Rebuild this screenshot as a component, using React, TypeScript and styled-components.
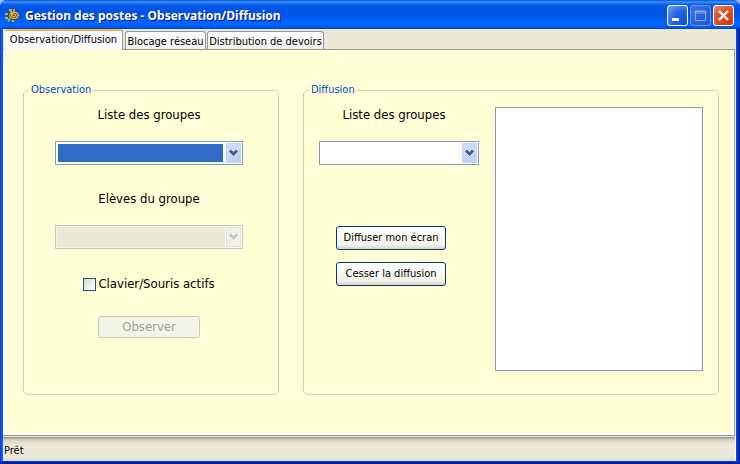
import React from 'react';
import styled, { createGlobalStyle } from 'styled-components';

const Page = createGlobalStyle`
  * { box-sizing: border-box; }
  body {
    margin: 0;
    background: #9db8e6;
    font: 11px/14px "DejaVu Sans Condensed", "DejaVu Sans", sans-serif;
    color: #000;
  }
  button, select, input { font: inherit; margin: 0; }
`;

const Window = styled.div`
  display: flex;
  flex-direction: column;
  min-height: 100vh;
  padding: 0 4px 3px 3px;
  border-radius: 7px 7px 0 0;
  background: linear-gradient(90deg, #0831d9 0, #166aee 2px, #0855dd 3px, #0855dd calc(100% - 4px), #0441d8 calc(100% - 3px), #00138c 100%);
  box-shadow: inset 0 -2px #001ea0, inset 0 -3px #0441d8;
`;

const TitleBar = styled.header`
  display: flex;
  align-items: center;
  gap: 5px;
  height: 29px;
  margin: 0 -4px 0 -3px;
  padding: 2px 6px 0 5px;
  border-radius: 7px 7px 0 0;
  background: linear-gradient(#0a4fc8 0, #3d95ff 2px, #0a62ee 4px, #0055e5 7px, #0054e3 14px, #0062fb 20px, #0066ff 25px, #005bf0 27px, #003dc4 29px);
`;

const Title = styled.h1`
  flex: 1;
  margin: 0;
  font: bold 12px/18px "Noto Sans", "Open Sans", sans-serif;
  color: #fff;
  text-shadow: 1px 1px #0f1089;
  white-space: nowrap;
`;

const Controls = styled.div`
  display: flex;
  gap: 2px;
`;

const Control = styled.button<{ $kind: 'blue' | 'dim' | 'red' }>`
  display: grid;
  place-items: center;
  width: 21px;
  height: 21px;
  padding: 0;
  border: 1px solid ${p => (p.$kind === 'dim' ? '#6d94ee' : '#fff')};
  border-radius: 3px;
  background: ${p =>
    p.$kind === 'red'
      ? 'radial-gradient(circle at 80% 90%, #d33a08, #e0502c 60%, #ee8f74)'
      : p.$kind === 'dim'
        ? 'linear-gradient(135deg, #3b70e6, #1f56dc)'
        : 'radial-gradient(circle at 90% 90%, #0054e9, #2663e0 50%, #789df0)'};
`;

const Tabs = styled.nav`
  display: flex;
  align-items: flex-end;
  height: 20px;
  padding-left: 1px;
  gap: 1px;
  background: #ece9d8;
`;

const Tab = styled.button<{ $active?: boolean; $width: number }>`
  width: ${p => p.$width}px;
  height: ${p => (p.$active ? 21 : 18)}px;
  margin: ${p => (p.$active ? '0 1px -1px 0' : '0')};
  padding: ${p => (p.$active ? '0 0 3px' : '2px 0 0')};
  border: 1px solid #919b9c;
  border-bottom: 0;
  border-radius: 3px 3px 0 0;
  background: linear-gradient(#fff, #f2f1e9);
  line-height: 15px;
  white-space: nowrap;
  ${p => p.$active && `
    z-index: 1;
    border-top: 2px solid #ffb13c;
    border-left-color: #fff;
    background: #fcfcfe;
  `}
`;

const Panel = styled.main`
  flex: 1;
  display: grid;
  grid-template-columns: 256fr 416fr;
  gap: 24px;
  padding: 33px 15px 40px 20px;
  border: solid #919b9c;
  border-width: 1px 1px 1px 0;
  margin-right: 1px;
  background: #ffffd5;
  box-shadow: inset 4px 0 #fcfcf0, inset 0 -2px #fff, inset -1px 0 #fff;
`;

const PanelFrame = styled.div`
  flex: 1;
  display: flex;
  flex-direction: column;
  background: #ece9d8;
`;

const Group = styled.fieldset`
  min-width: 0;
  margin: 0;
  padding: 10px 15px 23px;
  border: 1px solid #d0d0bf;
  border-radius: 5px;
`;

const Legend = styled.legend`
  margin-left: -10px;
  padding: 0 2px;
  color: #0046d5;
`;

const Observation = styled.div`
  display: flex;
  flex-direction: column;
  align-items: center;
  padding: 0 20px 0 16px;
`;

const Broadcast = styled.div`
  display: grid;
  grid-template-columns: 160fr 208fr;
  gap: 16px;
  height: 100%;
`;

const Column = styled.div`
  display: flex;
  flex-direction: column;
`;

const Field = styled.div`
  display: flex;
  flex-direction: column;
  align-self: stretch;
  gap: 18px;
`;

const Caption = styled.label<{ $indent?: boolean }>`
  font-size: 13px;
  line-height: 16px;
  white-space: nowrap;
  text-align: center;
  padding-right: ${p => (p.$indent ? 10 : 0)}px;
`;

const ComboBox = styled.div`
  display: grid;
  align-items: center;
  & > * { grid-area: 1 / 1; }
`;

const Select = styled.select<{ $selected?: boolean }>`
  appearance: none;
  width: 100%;
  height: 24px;
  padding: 2px 19px 2px 2px;
  border: 1px solid #7f9db9;
  border-radius: 0;
  outline: 0;
  background: ${p => (p.$selected ? 'linear-gradient(#316ac5, #316ac5) content-box, #fff' : '#fff')};
  &:disabled {
    opacity: 1;
    border-color: #c9c7ba;
    background: #ece9d8;
    box-shadow: inset 0 0 0 1px #f5f4ea;
  }
`;

const Arrow = styled.span<{ $disabled?: boolean }>`
  justify-self: end;
  display: grid;
  place-items: center;
  width: 15px;
  height: 20px;
  margin-right: 2px;
  border-radius: 1px;
  color: ${p => (p.$disabled ? '#c9c7ba' : '#4d6185')};
  background: ${p => (p.$disabled ? '#f2f1e8' : 'linear-gradient(135deg, #d4e1ff, #b9cdf8)')};
  box-shadow: ${p => (p.$disabled ? '0 0 0 1px #fff, inset 0 0 0 1px #e3e1d4' : 'inset 0 0 0 1px #c1d3fb')};
  pointer-events: none;
`;

const Check = styled.label`
  display: flex;
  align-items: center;
  gap: 2px;
  font-size: 13px;
  line-height: 16px;
  white-space: nowrap;
`;

const CheckInput = styled.input`
  appearance: none;
  width: 13px;
  height: 13px;
  border: 1px solid #1c5180;
  background: linear-gradient(135deg, #dcdcd7, #fff);
  &:checked { background: #21a121; }
`;

const Button = styled.button`
  width: 110px;
  height: 24px;
  padding: 0;
  border: 1px solid #003c74;
  border-radius: 3px;
  background: linear-gradient(#fff, #f3f2ec 80%, #d9d3c5);
  white-space: nowrap;
  &:disabled {
    width: 102px;
    height: 22px;
    border-color: #c9c7ba;
    background: #f5f4ea;
    color: #a1a192;
    font-size: 13px;
    line-height: 16px;
  }
`;

const Actions = styled.div`
  display: flex;
  flex-direction: column;
  align-items: center;
  gap: 12px;
  padding-right: 16px;
`;

const Space = styled.div<{ $size: number }>`
  height: ${p => p.$size}px;
`;

const List = styled.select`
  width: 100%;
  height: 100%;
  padding: 0;
  border: 1px solid #7f9db9;
  border-radius: 0;
  background: #fff;
  overflow: hidden;
`;

const StatusBar = styled.footer`
  height: 24px;
  padding: 7px 1px 0;
  margin-top: 1px;
  border-right: 1px solid #fff;
  background: linear-gradient(#8f8d82 0, #c5c2b4 2px, #dedbcd 4px, #ece9d8 9px, #ece9d8 20px, #dedac8 24px);
`;

function SunIcon() {
  return (
    <svg width="15" height="15" viewBox="0 0 15 15" fill="none" aria-hidden="true">
      <path d="M4 2h2v2M9 1v2M0 6h3M0 10h3M3 13l2-2M8 14v-2" stroke="#e3aa21" strokeWidth="2" />
      <ellipse cx="9" cy="7.5" rx="5" ry="4" fill="#f0bb30" />
      <path d="M5 6c0 5 7 4 7 1 0-2-4-2-4 0 0 1 2 1 2 0M14 8c-1 4-6 4-8 3" stroke="#50401c" />
    </svg>
  );
}

function Chevron() {
  return (
    <svg width="9" height="6" viewBox="0 0 9 6" fill="currentColor" shapeRendering="crispEdges" aria-hidden="true">
      <path d="M1 0h2v1h1v1h1V1h1V0h2v1h1v1H8v1H7v1H6v1H5v1H4V5H3V4H2V3H1V2H0V1h1z" />
    </svg>
  );
}

export default function App() {
  return (
    <>
      <Page />
      <Window>
        <TitleBar>
          <SunIcon />
          <Title>Gestion des postes - Observation/Diffusion</Title>
          <Controls>
            <Control $kind="blue" aria-label="Réduire">
              <svg width="19" height="19"><path d="M4 12h7v3H4z" fill="#fff" /></svg>
            </Control>
            <Control $kind="dim" aria-label="Agrandir" disabled>
              <svg width="19" height="19" fill="none"><path d="M4.500 5.500h10v9h-10zM4 5h11v2H4z" stroke="#8ea6ef" /></svg>
            </Control>
            <Control $kind="red" aria-label="Fermer">
              <svg width="19" height="19"><path d="M5 5l9 9M14 5l-9 9" stroke="#fff" strokeWidth="2.300" /></svg>
            </Control>
          </Controls>
        </TitleBar>
        <PanelFrame>
          <Tabs>
            <Tab $active $width={119}>Observation/Diffusion</Tab>
            <Tab $width={81}>Blocage réseau</Tab>
            <Tab $width={117}>Distribution de devoirs</Tab>
          </Tabs>
          <Panel>
            <Group>
              <Legend>Observation</Legend>
              <Observation>
                <Field>
                  <Caption htmlFor="observed-group">Liste des groupes</Caption>
                  <ComboBox>
                    <Select id="observed-group" $selected />
                    <Arrow><Chevron /></Arrow>
                  </ComboBox>
                </Field>
                <Space $size={26} />
                <Field>
                  <Caption htmlFor="student">Elèves du groupe</Caption>
                  <ComboBox>
                    <Select id="student" disabled />
                    <Arrow $disabled><Chevron /></Arrow>
                  </ComboBox>
                </Field>
                <Space $size={27} />
                <Check><CheckInput type="checkbox" />Clavier/Souris actifs</Check>
                <Space $size={24} />
                <Button disabled>Observer</Button>
              </Observation>
            </Group>
            <Group>
              <Legend>Diffusion</Legend>
              <Broadcast>
                <Column>
                  <Field>
                    <Caption htmlFor="broadcast-group" $indent>Liste des groupes</Caption>
                    <ComboBox>
                      <Select id="broadcast-group" />
                      <Arrow><Chevron /></Arrow>
                    </ComboBox>
                  </Field>
                  <Space $size={61} />
                  <Actions>
                    <Button>Diffuser mon écran</Button>
                    <Button>Cesser la diffusion</Button>
                  </Actions>
                </Column>
                <List multiple aria-label="Postes" />
              </Broadcast>
            </Group>
          </Panel>
          <StatusBar>Prêt</StatusBar>
        </PanelFrame>
      </Window>
    </>
  );
}
